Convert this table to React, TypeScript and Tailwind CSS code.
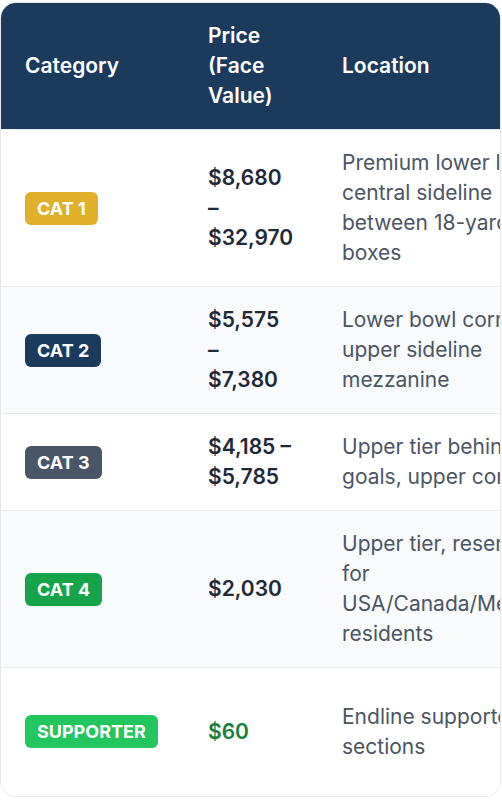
type Tier = {
  label: string;
  badge: string;
  price: string;
  priceClass?: string;
  location: string;
  note: string;
  rowClass: string;
};

const TIERS: Tier[] = [
  {
    label: "CAT 1",
    badge: "bg-[#e0b02a]",
    price: "$8,680 – $32,970",
    location: "Premium lower level, central sideline between 18-yard boxes",
    note: "Best views of the pitch",
    rowClass: "bg-white",
  },
  {
    label: "CAT 2",
    badge: "bg-[#1b3a5c]",
    price: "$5,575 – $7,380",
    location: "Lower bowl corners, upper sideline mezzanine",
    note: "Great value for sideline views",
    rowClass: "bg-[#f8fafc]",
  },
  {
    label: "CAT 3",
    badge: "bg-[#4a5568]",
    price: "$4,185 – $5,785",
    location: "Upper tier behind goals, upper corners",
    note: "Elevated angles",
    rowClass: "bg-white",
  },
  {
    label: "CAT 4",
    badge: "bg-[#17a34a]",
    price: "$2,030",
    location: "Upper tier, reserved for USA/Canada/Mexico residents",
    note: "Host nation residents only",
    rowClass: "bg-[#f8fafc]",
  },
  {
    label: "SUPPORTER",
    badge: "bg-[#22c55e]",
    price: "$60",
    priceClass: "text-[#15803d]",
    location: "Endline supporter sections",
    note: "Allocated through national federations only",
    rowClass: "bg-white h-[128px]",
  },
];

export default function App() {
  return (
    <div className="min-h-screen bg-white pt-[2px] font-['Inter','Liberation_Sans',sans-serif]">
      <div className="w-[501px] overflow-hidden rounded-2xl border border-[#e5e7eb]">
        <table className="w-[960px] table-fixed border-collapse text-left text-[21px] leading-[30px]">
          <colgroup>
            <col className="w-[183px]" />
            <col className="w-[134px]" />
            <col className="w-[268px]" />
            <col className="w-[375px]" />
          </colgroup>
          <thead>
            <tr className="bg-[#1b3a5c] text-white">
              <th className="px-6 py-[18px] align-middle font-semibold">Category</th>
              <th className="pl-6 pr-[26px] py-[18px] align-middle font-semibold">Price (Face Value)</th>
              <th className="px-6 py-[18px] align-middle font-semibold">Location</th>
              <th className="px-6 py-[18px] align-middle font-semibold">Notes</th>
            </tr>
          </thead>
          <tbody>
            {TIERS.map((t) => (
              <tr key={t.label} className={`border-t border-[#e8ecf0] ${t.rowClass}`}>
                <td className="px-6 py-[18px] align-middle">
                  <span
                    className={`inline-block rounded-md px-3 py-1 text-[18px] font-bold leading-[25px] whitespace-nowrap text-white ${t.badge}`}
                  >
                    {t.label}
                  </span>
                </td>
                <td
                  className={`pl-6 pr-[26px] py-[18px] align-middle font-semibold ${t.priceClass ?? "text-[#1f2937]"}`}
                >
                  {t.price}
                </td>
                <td className="px-6 py-[18px] align-middle text-[#4b5563]">{t.location}</td>
                <td className="px-6 py-[18px] align-middle text-[#4b5563]">{t.note}</td>
              </tr>
            ))}
          </tbody>
        </table>
      </div>
    </div>
  );
}
